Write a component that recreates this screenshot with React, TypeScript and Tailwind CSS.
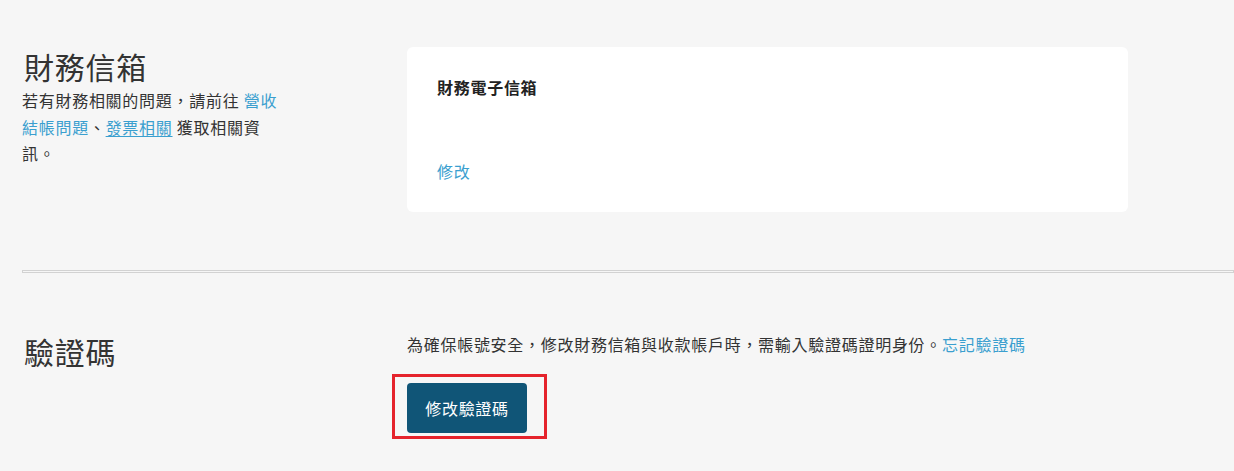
export default function App() {
  return (
    <div
      lang="zh-TW"
      className="min-h-screen bg-[#f6f6f6] pl-[22px] pt-[47px] tracking-[0.045em] text-[#333333]"
      style={{ fontFamily: '"Noto Sans CJK TC", "Noto Sans", sans-serif' }}
    >
      {/* 財務信箱 */}
      <section className="flex">
        <div className="w-[385px] shrink-0">
          <h2 className="pl-[2px] text-[30px] font-normal leading-[38px] text-[#333333]">財務信箱</h2>
          <p className="mt-[2px] whitespace-nowrap text-[16px] leading-[26.5px]">
            若有財務相關的問題，請前往 <span className="text-[#3a9fcf]">營收</span>
            <br />
            <span className="text-[#3a9fcf]">結帳問題</span>、
            <span className="text-[#3a9fcf] underline underline-offset-2">發票相關</span> 獲取相關資
            <br />
            訊。
          </p>
        </div>
        <div className="flex h-[165px] w-[721px] shrink-0 flex-col rounded-md bg-white px-[30px] pt-[28px]">
          <p className="text-[16px] font-bold leading-[24px] text-[#222222]">財務電子信箱</p>
          <span className="mt-[60px] text-[16px] leading-[24px] text-[#3a9fcf]">修改</span>
        </div>
      </section>

      <div className="mt-[58px] h-[3px] border border-[#d2d2d2]" />

      {/* 驗證碼 */}
      <section className="mt-[59px] flex">
        <div className="w-[385px] shrink-0">
          <h2 className="pl-[2px] text-[30px] font-normal leading-[38px] text-[#333333]">驗證碼</h2>
        </div>
        <div className="flex flex-col items-start">
          <p className="text-[16px] leading-[24px]">
            為確保帳號安全，修改財務信箱與收款帳戶時，需輸入驗證碼證明身份。
            <span className="text-[#3a9fcf]">忘記驗證碼</span>
          </p>
          <div className="relative mt-[27px]">
            <button className="h-[50px] w-[120px] rounded-[4px] bg-[#105577] text-[16px] text-white">
              修改驗證碼
            </button>
            <div className="pointer-events-none absolute -left-[15px] -top-[9px] h-[65px] w-[155px] border-[3px] border-[#e5232c]" />
          </div>
        </div>
      </section>
    </div>
  );
}
